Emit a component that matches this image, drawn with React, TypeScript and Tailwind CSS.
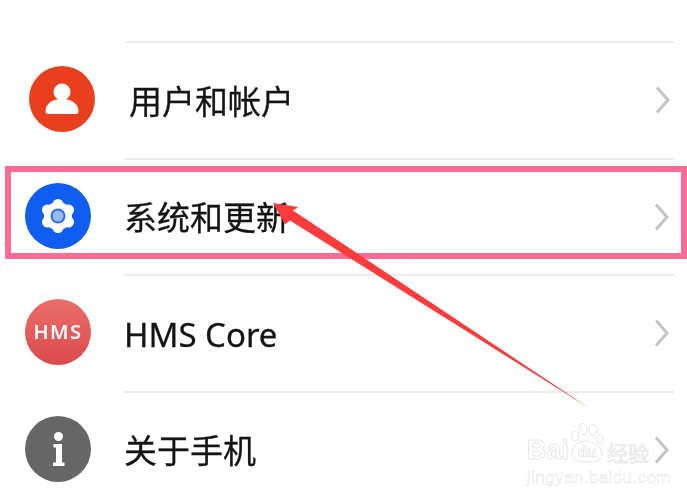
import type { ReactNode } from 'react'

const UserIcon = (): JSX.Element => (
  <div className="w-[66px] h-[66px] rounded-full bg-[#e8401f] flex items-center justify-center">
    <svg width="66" height="66" viewBox="0 0 66 66" fill="#fff" aria-hidden="true">
      <circle cx="33" cy="26" r="8.500" />
      <path d="M16.500 45c0-7.500 7.500-12 16.500-12s16.500 4.500 16.500 12c0 1.800-1 3-3 3H19.500c-2 0-3-1.200-3-3z" />
    </svg>
  </div>
)

const GearIcon = (): JSX.Element => (
  <div className="w-[66px] h-[66px] rounded-full bg-[#0f5ef0] flex items-center justify-center">
    <svg width="66" height="66" viewBox="0 0 66 66" aria-hidden="true">
      <g fill="#fff">
        <circle cx="33" cy="33" r="14" />
        <circle cx="33" cy="21.500" r="5.500" />
        <circle cx="33" cy="44.500" r="5.500" />
        <circle cx="22.500" cy="27" r="5.500" />
        <circle cx="43.500" cy="27" r="5.500" />
        <circle cx="22.500" cy="39" r="5.500" />
        <circle cx="43.500" cy="39" r="5.500" />
      </g>
      <circle cx="33" cy="33" r="7.500" fill="#2a6df2" />
      <circle cx="33" cy="33" r="5.500" fill="#9dbaf7" />
    </svg>
  </div>
)

const HmsIcon = (): JSX.Element => (
  <div className="w-[66px] h-[66px] rounded-full bg-gradient-to-b from-[#ea6e6b] to-[#da4a4c] flex items-center justify-center">
    <span className="text-white text-[20px] font-semibold tracking-[1.500px] font-['Noto_Sans',sans-serif] blur-[0.3px]">HMS</span>
  </div>
)

const InfoIcon = (): JSX.Element => (
  <div className="w-[66px] h-[66px] rounded-full bg-[#666666] flex items-center justify-center">
    <svg width="66" height="66" viewBox="0 0 66 66" fill="#fff" aria-hidden="true">
      <circle cx="33.500" cy="20.500" r="4.500" />
      <path d="M28.500 28h8.500v18.500h2.500V50H28v-3.500h3V31.500h-2.500z" />
    </svg>
  </div>
)

const Chevron = (): JSX.Element => (
  <svg className="blur-[0.5px]" width="15" height="28" viewBox="0 0 15 28" fill="none" stroke="#c4c4c4" strokeWidth="3" aria-hidden="true">
    <path d="M2 1.500l11 12.500L2 26.500" />
  </svg>
)

type RowProps = { icon: ReactNode; label: string; nudge?: boolean }

const Row = ({ icon, label, nudge }: RowProps): JSX.Element => (
  <div className={nudge ? 'h-[116.500px] flex pl-[29px]' : 'h-[116.500px] flex pl-[25px]'}>
    <div className="w-[66px] flex items-center shrink-0">{icon}</div>
    <div
      className={
        nudge
          ? 'flex-1 ml-[29px] mr-[13px] border-t-2 border-[#ececec] flex items-center justify-between pl-[5px] pr-[4px]'
          : 'flex-1 ml-[33px] mr-[13px] border-t-2 border-[#ececec] flex items-center justify-between pr-[5px]'
      }
    >
      <span className="text-[33px] leading-none pt-[2px] text-[#141414] font-['Noto_Sans','Noto_Sans_CJK_SC',sans-serif] [-webkit-text-stroke:0.3px_#141414] blur-[0.4px]">
        {label}
      </span>
      <Chevron />
    </div>
  </div>
)

const Watermark = (): JSX.Element => (
  <div className="absolute left-[527px] top-[423px] w-[122px] flex flex-col gap-[7px] text-white font-['Liberation_Sans',sans-serif] blur-[0.3px]">
    <div className="flex items-end h-[40px]">
      <span className="text-[27px] leading-[25px] font-bold [-webkit-text-stroke:1px_#e8e8e8]">Bai</span>
      <div className="relative w-[36px] h-[40px] shrink-0">
        <svg width="36" height="40" viewBox="0 0 36 40" fill="#fff" stroke="#e8e8e8" strokeWidth="1.200" aria-hidden="true">
          <ellipse cx="6" cy="13" rx="3.500" ry="5" />
          <ellipse cx="14" cy="6" rx="4" ry="5.500" />
          <ellipse cx="24" cy="7" rx="4" ry="5.500" />
          <ellipse cx="31" cy="16" rx="3.500" ry="4.500" />
          <path d="M3 31c0-9 8-13 14-13s16 5 16 13c0 6-6 8-15 8S3 37 3 31z" />
        </svg>
        <span className="absolute inset-x-0 bottom-[3px] text-center text-[15px] leading-[16px] font-bold [-webkit-text-stroke:0.8px_#e6e6e6]">du</span>
      </div>
      <span className="ml-auto text-[21px] leading-[22px] font-['Noto_Sans_CJK_SC',sans-serif] [-webkit-text-stroke:1px_#e8e8e8]">经验</span>
    </div>
    <span className="text-[17px] leading-[16px] tracking-[0.4px] whitespace-nowrap [-webkit-text-stroke:0.6px_#e8e8e8]">jingyan.baidu.com</span>
  </div>
)

export default function App(): JSX.Element {
  return (
    <div className="relative w-[687px] h-[497px] overflow-hidden bg-white">
      <div className="h-[41px]" />
      <Row icon={<UserIcon />} label="用户和帐户" nudge />
      <Row icon={<GearIcon />} label="系统和更新" />
      <Row icon={<HmsIcon />} label="HMS Core" />
      <Row icon={<InfoIcon />} label="关于手机" />

      <Watermark />

      {/* 标注框 */}
      <div className="absolute left-[5px] right-0 top-[166px] h-[93px] border-[6.500px] border-[#ff6b94]" />
      {/* 标注箭头 */}
      <svg className="absolute inset-0" width="687" height="497" viewBox="0 0 687 497" aria-hidden="true">
        <path fill="#ff3b3b" d="M273 203l25 4-5 3.500L589 408 290 220.500l-5 4z" />
      </svg>
    </div>
  )
}
